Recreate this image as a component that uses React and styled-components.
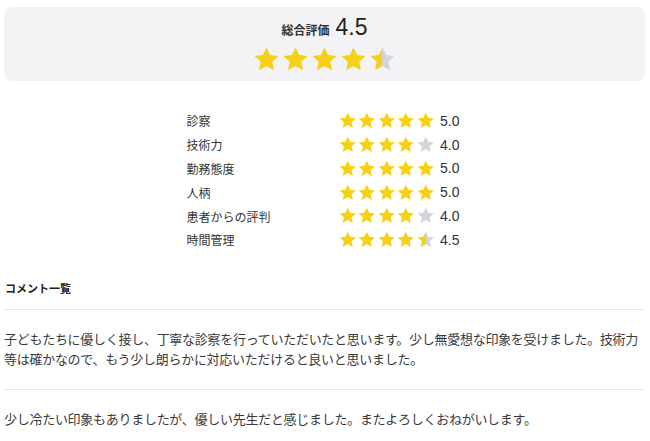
import React from "react";
import styled, { createGlobalStyle } from "styled-components";

const Global = createGlobalStyle`
  body { margin: 0; background: #fff; font-family: "Noto Sans CJK JP", "Noto Sans", sans-serif; color: #333; }
`;

const Page = styled.div`
  padding: 7px 5px 0 4px;
`;

const Summary = styled.section`
  height: 74px;
  background: #f3f3f5;
  border-radius: 8px;
  display: flex;
  flex-direction: column;
  align-items: center;
  padding-top: 9px;
  box-sizing: border-box;
`;

const TitleRow = styled.div`
  display: flex;
  align-items: baseline;
  gap: 6px;
  height: 23px;
`;

const TitleLabel = styled.span`
  font-size: 12px;
  font-weight: 700;
  color: #333;
`;

const TitleValue = styled.span`
  font-family: "Liberation Sans", Arial, sans-serif;
  font-size: 23px;
  color: #222;
  line-height: 23px;
`;

const StarRow = styled.div`
  display: flex;
  gap: ${(p) => p.$gap}px;
  margin-top: ${(p) => p.$mt || 0}px;
`;

const Ratings = styled.div`
  margin: 28px auto 0;
  width: 274px;
  transform: translateX(-1px);
`;

const Row = styled.div`
  display: grid;
  grid-template-columns: 151px auto 1fr;
  align-items: center;
  height: 23.8px;
`;

const Label = styled.span`
  font-size: 12px;
  color: #333;
`;

const Value = styled.span`
  font-family: "Liberation Sans", Arial, sans-serif;
  font-size: 14px;
  color: #333;
  margin-left: 5px;
`;

const Heading = styled.h2`
  margin: 28px 0 0;
  font-size: 11px;
  line-height: 16px;
  font-weight: 700;
  color: #222;
  padding-bottom: 13px;
  padding-left: 1px;
`;

const Comment = styled.p`
  margin: 0;
  border-top: 1px solid #e6e6e9;
  padding: 19px 0 20px;
  font-size: 13px;
  line-height: 20px;
  letter-spacing: -0.28px;
  color: #3a3a3a;
`;

const YELLOW = "#f5d015";
const GRAY = "#d2d5dc";
const PATH = "M12 2l3 6.35 6.95.76-5.18 4.77 1.45 6.92L12 17.3l-6.22 3.5 1.45-6.92-5.18-4.77L9 8.35z";

let uid = 0;
function Star({ fill, size }) {
  const id = React.useMemo(() => `half${uid++}`, []);
  const color = fill >= 1 ? YELLOW : GRAY;
  return (
    <svg width={size} height={size} viewBox="0 0 24 24">
      {fill > 0 && fill < 1 ? (
        <>
          <defs>
            <linearGradient id={id} x1="0" x2="1" y1="0" y2="0">
              <stop offset={fill} stopColor={YELLOW} />
              <stop offset={fill} stopColor={GRAY} />
            </linearGradient>
          </defs>
          <path d={PATH} fill={`url(#${id})`} />
        </>
      ) : (
        <path d={PATH} fill={color} />
      )}
    </svg>
  );
}

function Stars({ value, size, gap, mt }) {
  return (
    <StarRow $gap={gap} $mt={mt}>
      {[0, 1, 2, 3, 4].map((i) => (
        <Star key={i} size={size} fill={Math.max(0, Math.min(1, value - i))} />
      ))}
    </StarRow>
  );
}

const items = [
  ["診察", 5.0],
  ["技術力", 4.0],
  ["勤務態度", 5.0],
  ["人柄", 5.0],
  ["患者からの評判", 4.0],
  ["時間管理", 4.5],
];

export default function App() {
  return (
    <Page>
      <Global />
      <Summary>
        <TitleRow>
          <TitleLabel>総合評価</TitleLabel>
          <TitleValue>4.5</TitleValue>
        </TitleRow>
        <Stars value={4.5} size={29} gap={0} mt={6} />
      </Summary>
      <Ratings>
        {items.map(([label, v]) => (
          <Row key={label}>
            <Label>{label}</Label>
            <Stars value={v} size={19.5} gap={0} />
            <Value>{v.toFixed(1)}</Value>
          </Row>
        ))}
      </Ratings>
      <Heading>コメント一覧</Heading>
      <Comment>
        子どもたちに優しく接し、丁寧な診察を行っていただいたと思います。少し無愛想な印象を受けました。技術力等は確かなので、もう少し朗らかに対応いただけると良いと思いました。
      </Comment>
      <Comment>
        少し冷たい印象もありましたが、優しい先生だと感じました。またよろしくおねがいします。
      </Comment>
    </Page>
  );
}
